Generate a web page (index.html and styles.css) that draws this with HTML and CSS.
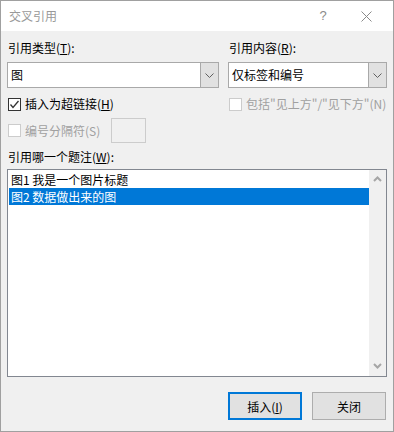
FILE: index.html
```html
<!DOCTYPE html>
<html lang="zh-CN">
<head>
    <meta charset="UTF-8">
    <title>交叉引用</title>
    <link rel="stylesheet" href="styles.css">
</head>
<body>
    <div class="window">
        <div class="titlebar">
            <span class="title">交叉引用</span>
            <span class="help">?</span>
            <span class="close">
                <svg width="11" height="11" viewBox="0 0 11 11"><path d="M0.5 0.5 L10.5 10.5 M10.5 0.5 L0.5 10.5" stroke="#8a8a8a" stroke-width="1" fill="none"/></svg>
            </span>
        </div>
        <div class="body">
            <div class="top">
                <div class="col">
                    <div class="label">引用类型(<u>T</u>):</div>
                    <div class="combo">
                        <div class="combo-text">图</div>
                        <div class="combo-btn">
                            <svg width="9" height="5" viewBox="0 0 9 5"><path d="M0.5 0.5 L4.5 4.5 L8.5 0.5" stroke="#606060" stroke-width="1" fill="none"/></svg>
                        </div>
                    </div>
                    <div class="check-row">
                        <span class="box checked">
                            <svg width="11" height="11" viewBox="0 0 11 11"><path d="M1.5 5.5 L4 8.5 L9.5 2" stroke="#333" stroke-width="1.3" fill="none"/></svg>
                        </span>
                        <span>插入为超链接(<u>H</u>)</span>
                    </div>
                    <div class="sep-row">
                        <span class="box disabled"></span>
                        <span class="muted">编号分隔符(S)</span>
                        <span class="sep-input"></span>
                    </div>
                </div>
                <div class="col">
                    <div class="label">引用内容(<u>R</u>):</div>
                    <div class="combo">
                        <div class="combo-text">仅标签和编号</div>
                        <div class="combo-btn">
                            <svg width="9" height="5" viewBox="0 0 9 5"><path d="M0.5 0.5 L4.5 4.5 L8.5 0.5" stroke="#606060" stroke-width="1" fill="none"/></svg>
                        </div>
                    </div>
                    <div class="check-row">
                        <span class="box disabled"></span>
                        <span class="muted nowrap">包括"见上方"/"见下方"(N)</span>
                    </div>
                </div>
            </div>

            <div class="label list-label">引用哪一个题注(<u>W</u>):</div>
            <div class="listbox">
                <div class="items">
                    <div class="item">图1 我是一个图片标题</div>
                    <div class="item selected">图2 数据做出来的图</div>
                </div>
                <div class="scrollbar">
                    <svg width="9" height="6" viewBox="0 0 9 6"><path d="M1 5 L4.5 1.5 L8 5" stroke="#a6a6a6" stroke-width="2" fill="none"/></svg>
                    <svg width="9" height="6" viewBox="0 0 9 6"><path d="M1 1 L4.5 4.5 L8 1" stroke="#a6a6a6" stroke-width="2" fill="none"/></svg>
                </div>
            </div>

            <div class="buttons">
                <button class="btn default">插入(<u>I</u>)</button>
                <button class="btn">关闭</button>
            </div>
        </div>
    </div>
</body>
</html>
```

FILE: styles.css
```css
* { box-sizing: border-box; }
body {
    margin: 0;
    font-family: "Noto Sans CJK SC", "Noto Sans", sans-serif;
    font-size: 12px;
    line-height: 16px;
    color: #000;
}
u { text-decoration: underline; text-underline-offset: 1px; }
.window {
    width: 394px;
    height: 432px;
    border: 1px solid #a0a0a0;
    background: #f0f0f0;
    display: flex;
    flex-direction: column;
}
.titlebar {
    height: 30px;
    background: #fff;
    display: flex;
    align-items: center;
    padding-left: 8px;
    color: #999;
}
.title { flex: 1; }
.help {
    width: 46px;
    text-align: center;
    color: #8a8a8a;
    font-family: "Liberation Sans", sans-serif;
    font-size: 13px;
    margin-right: -3px;
}
.close {
    width: 46px;
    height: 30px;
    display: flex;
    align-items: center;
    justify-content: center;
    margin-right: 4px;
}
.body {
    flex: 1;
    padding: 9px 6px 0 6px;
}
.top {
    display: grid;
    grid-template-columns: 212px 159px;
    column-gap: 9px;
}
.label { height: 16px; padding-left: 1px; }
.combo {
    margin-top: 6px;
    height: 26px;
    border: 1px solid #a9a9a9;
    background: #fff;
    display: flex;
}
.combo-text {
    flex: 1;
    padding-left: 3px;
    line-height: 24px;
}
.combo-btn {
    width: 18px;
    background: #e1e1e1;
    border-left: 1px solid #a9a9a9;
    display: flex;
    align-items: center;
    justify-content: center;
}
.check-row {
    margin-top: 8px;
    height: 16px;
    display: flex;
    align-items: center;
    gap: 4px;
    padding-left: 1px;
}
.nowrap { white-space: nowrap; }
.box {
    flex: none;
    width: 13px;
    height: 13px;
    border: 1px solid #333;
    background: #fff;
    display: flex;
    align-items: center;
    justify-content: center;
}
.box.disabled { border-color: #ccc; background: #fff; }
.muted { color: #a0a0a0; }
.sep-row {
    margin-top: 6px;
    height: 25px;
    display: flex;
    align-items: center;
    gap: 4px;
    padding-left: 1px;
}
.sep-input {
    width: 35px;
    height: 25px;
    border: 1px solid #ccc;
    margin-left: 7px;
}
.list-label { margin-top: 6px; }
.listbox {
    margin-top: 4px;
    height: 208px;
    width: 380px;
    border: 1px solid #828790;
    background: #fff;
    display: flex;
}
.items {
    flex: 1;
    padding: 1px 0 0 1px;
}
.item {
    height: 17px;
    line-height: 17px;
    padding-left: 2px;
}
.item.selected {
    background: #0078d7;
    color: #fff;
}
.scrollbar {
    width: 17px;
    background: #f0f0f0;
    display: flex;
    flex-direction: column;
    justify-content: space-between;
    align-items: center;
    padding: 6px 0 7px;
}
.buttons {
    margin-top: 15px;
    display: flex;
    justify-content: flex-end;
    gap: 10px;
    padding-right: 1px;
}
.btn {
    width: 74px;
    height: 28px;
    background: #e1e1e1;
    border: 1px solid #adadad;
    font-family: inherit;
    font-size: 12px;
    color: #000;
    padding: 0;
}
.btn.default { border: 2px solid #0078d7; }
```
